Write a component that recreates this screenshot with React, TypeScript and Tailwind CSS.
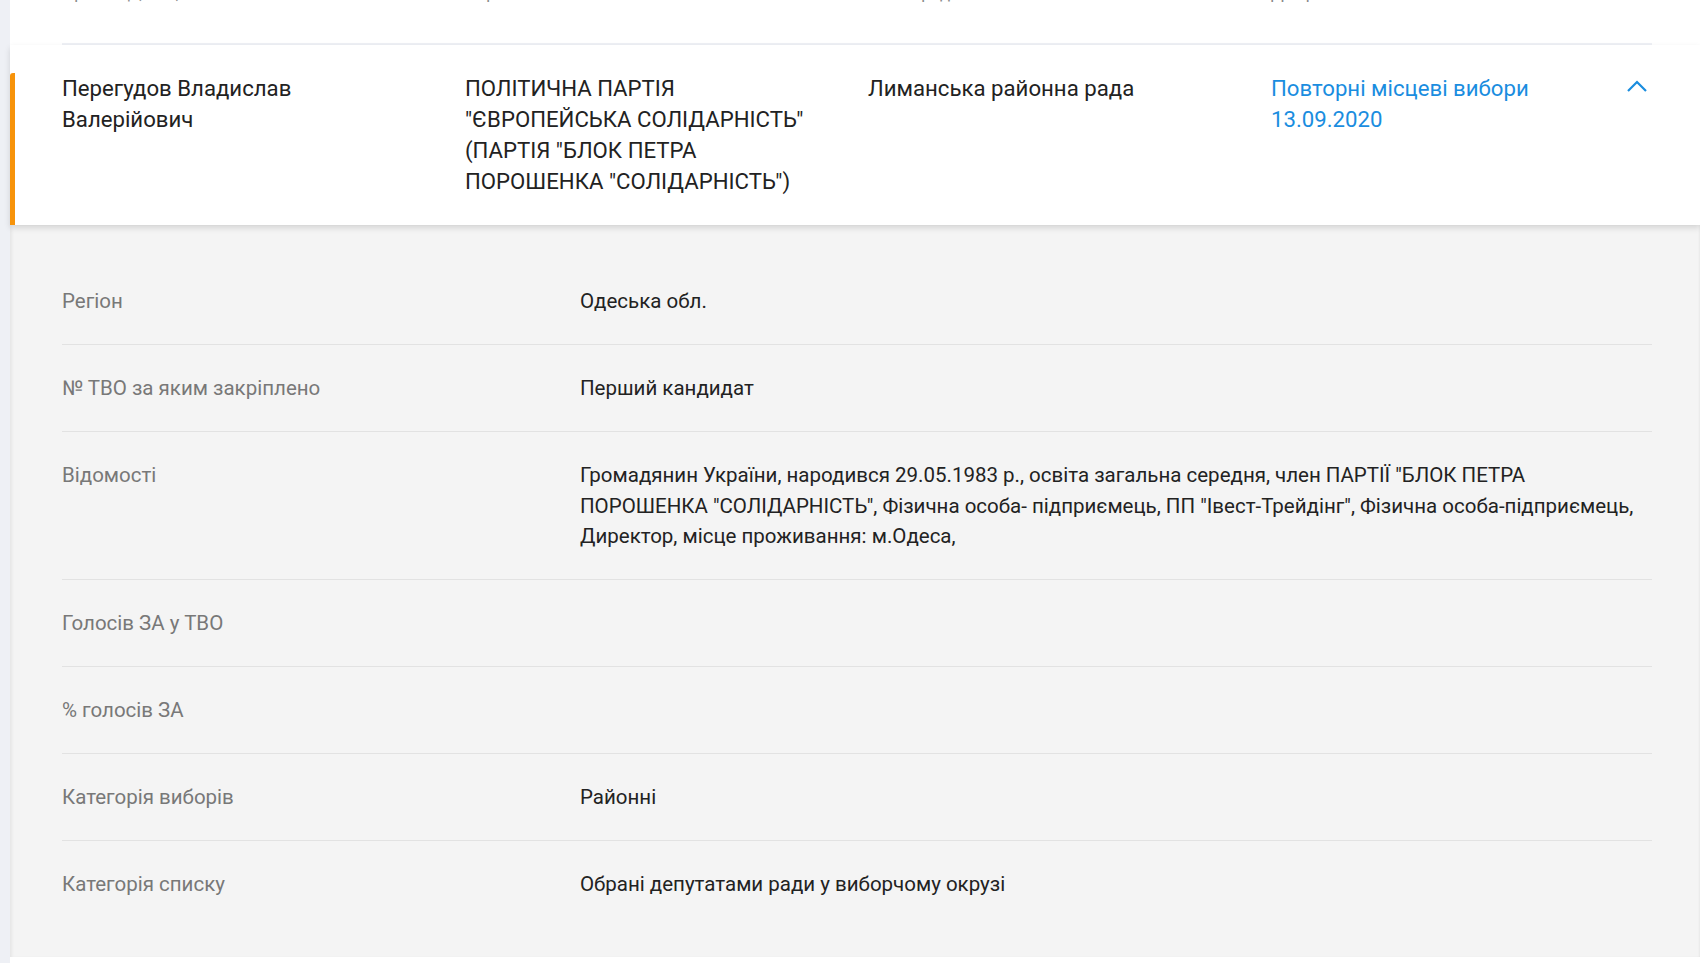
import React from 'react';

const details: { label: string; value: string }[] = [
  { label: 'Регіон', value: 'Одеська обл.' },
  { label: '№ ТВО за яким закріплено', value: 'Перший кандидат' },
  {
    label: 'Відомості',
    value:
      'Громадянин України, народився 29.05.1983 р., освіта загальна середня, член ПАРТІЇ "БЛОК ПЕТРА\nПОРОШЕНКА "СОЛІДАРНІСТЬ", Фізична особа- підприємець, ПП "Івест-Трейдінг", Фізична особа-підприємець,\nДиректор, місце проживання: м.Одеса,',
  },
  { label: 'Голосів ЗА у ТВО', value: '' },
  { label: '% голосів ЗА', value: '' },
  { label: 'Категорія виборів', value: 'Районні' },
  { label: 'Категорія списку', value: 'Обрані депутатами ради у виборчому окрузі' },
];

const font = { fontFamily: 'Roboto, "Noto Sans", sans-serif' };

export default function App() {
  return (
    <div className="flex min-h-screen bg-white text-[20.5px]" style={font}>
      <div className="w-[10px] shrink-0 bg-[#eef0f5]" />

      <div className="flex-1 min-w-0">
        {/* table header, scrolled partly out of view */}
        <div className="h-[45px] pl-[52px] pr-[48px] overflow-hidden">
          <div className="h-full border-b-2 border-[#eef0f5]">
            <div className="grid grid-cols-[403px_403px_403px_1fr] -translate-y-[17px] text-[17px] leading-[20px] text-[#8a8a8a]">
              <span>Прізвище, ім'я, по батькові</span>
              <span>Партія</span>
              <span>Назва ради</span>
              <span>Джерело</span>
            </div>
          </div>
        </div>

        {/* selected row */}
        <div className="relative z-10 bg-white pt-[28px] shadow-[0_3px_6px_rgba(0,0,0,0.13)]">
          <div className="flex">
            <div className="w-[5px] shrink-0 rounded-tl-[3px] bg-[#f7930a]" />
            <div className="flex-1 pl-[47px] pr-[48px] pb-[28px]">
              <div className="grid grid-cols-[403px_403px_403px_1fr_auto] text-[22.2px] leading-[31px] text-[#222]">
                <div>
                  Перегудов Владислав
                  <br />
                  Валерійович
                </div>
                <div>
                  ПОЛІТИЧНА ПАРТІЯ
                  <br />
                  "ЄВРОПЕЙСЬКА СОЛІДАРНІСТЬ"
                  <br />
                  (ПАРТІЯ "БЛОК ПЕТРА
                  <br />
                  ПОРОШЕНКА "СОЛІДАРНІСТЬ")
                </div>
                <div>Лиманська районна рада</div>
                <div className="text-[#1a8ddf]">
                  Повторні місцеві вибори
                  <br />
                  13.09.2020
                </div>
                <button className="mt-[2px] mr-[3px] self-start text-[#1a8ddf]">
                  <svg width="24" height="24" viewBox="0 0 24 24" fill="none" stroke="currentColor" strokeWidth="2.2">
                    <polyline points="3,16 12,7 21,16" />
                  </svg>
                </button>
              </div>
            </div>
          </div>
        </div>

        {/* expanded details */}
        <div className="bg-[#f4f4f4] pt-[33px] pb-[30px] pl-[52px] pr-[48px] shadow-[inset_3px_0_3px_-1px_rgba(0,0,0,0.06),inset_-2px_0_2px_-1px_rgba(0,0,0,0.05)]">
          {details.map((d, i) => (
            <div
              key={d.label}
              className={`grid grid-cols-[518px_1fr] pt-[28px] pb-[27.5px] leading-[30.5px] ${
                i < details.length - 1 ? 'border-b border-[#e2e2e2]' : ''
              }`}
            >
              <div className="text-[#787878]">{d.label}</div>
              <div className="whitespace-pre-line text-[#222]">{d.value}</div>
            </div>
          ))}
        </div>
        <div className="h-[5px] bg-white" />
      </div>
    </div>
  );
}
